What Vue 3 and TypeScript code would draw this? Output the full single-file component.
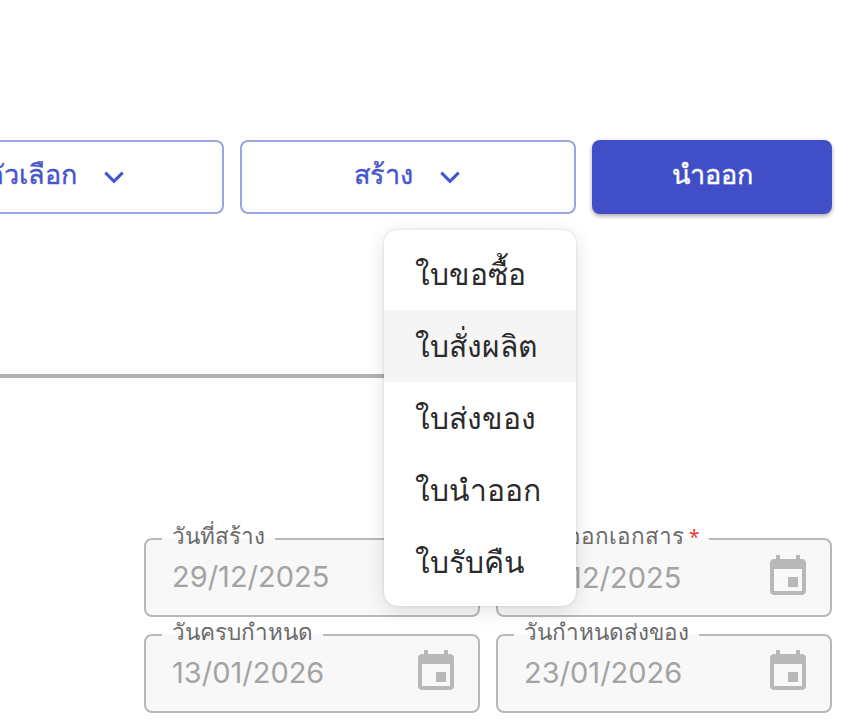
<template>
  <div class="page">
    <div class="actions">
      <button class="btn outline">
        <span class="btn-text">ตัวเลือก</span>
        <svg class="chevron" viewBox="0 0 24 24"><path d="M6.8 9.4 12 14.6l5.2-5.2" /></svg>
      </button>
      <div class="dropdown">
        <button class="btn outline">
          <span class="btn-text">สร้าง</span>
          <svg class="chevron" viewBox="0 0 24 24"><path d="M6.8 9.4 12 14.6l5.2-5.2" /></svg>
        </button>
        <ul class="menu">
          <li v-for="item in menuItems" :key="item" :class="{ hover: item === hoverItem }">{{ item }}</li>
        </ul>
      </div>
      <button class="btn primary"><span class="btn-text">นำออก</span></button>
    </div>

    <div class="divider"></div>

    <div class="dates">
      <fieldset v-for="field in dateFields" :key="field.label" class="date-field">
        <legend>{{ field.label }}<span v-if="field.required" class="req"> *</span></legend>
        <div class="date-row">
          <span class="date-value">{{ field.value }}</span>
          <svg class="calendar" viewBox="0 0 24 24">
            <path d="M17 12h-5v5h5v-5zM16 1v2H8V1H6v2H5c-1.11 0-1.99.9-1.99 2L3 19c0 1.1.89 2 2 2h14c1.1 0 2-.9 2-2V5c0-1.1-.9-2-2-2h-1V1h-2zm3 18H5V8h14v11z" />
          </svg>
        </div>
      </fieldset>
    </div>
  </div>
</template>

<script setup lang="ts">
interface DateField {
  label: string;
  value: string;
  required?: boolean;
}

const menuItems: string[] = ["ใบขอซื้อ", "ใบสั่งผลิต", "ใบส่งของ", "ใบนำออก", "ใบรับคืน"];
const hoverItem = "ใบสั่งผลิต";

const dateFields: DateField[] = [
  { label: "วันที่สร้าง", value: "29/12/2025" },
  { label: "วันที่ออกเอกสาร", value: "29/12/2025", required: true },
  { label: "วันครบกำหนด", value: "13/01/2026" },
  { label: "วันกำหนดส่งของ", value: "23/01/2026" },
];
</script>

<style>
html,
body {
  margin: 0;
  overflow: hidden;
  background: #fff;
}
</style>

<style scoped>
.page {
  box-sizing: border-box;
  width: 860px;
  height: 724px;
  padding: 140px 28px 0 0;
  overflow: hidden;
  font-family: "Noto Sans", "Liberation Sans", sans-serif;
}

.actions {
  display: flex;
  justify-content: flex-end;
  gap: 16px;
}

.btn {
  box-sizing: border-box;
  display: flex;
  flex-shrink: 0;
  align-items: center;
  justify-content: center;
  gap: 17px;
  height: 74px;
  padding: 0;
  border-radius: 8px;
  font-family: inherit;
  font-size: 27px;
  font-weight: 500;
}

.btn-text {
  margin-bottom: 5px;
  -webkit-text-stroke: 0.4px currentColor;
}

.outline {
  width: 336px;
  padding-left: 7px;
  border: 2px solid #9ca4e8;
  background: #fff;
  color: #4656cc;
}

.primary {
  width: 240px;
  border: none;
  background: #404fc7;
  color: #fff;
  box-shadow: 0 2px 4px rgba(0, 0, 0, 0.35);
}

.chevron {
  width: 40px;
  height: 40px;
  fill: none;
  stroke: #4656cc;
  stroke-width: 1.9;
}

.dropdown {
  position: relative;
}

.menu {
  position: absolute;
  top: 90px;
  right: 0;
  z-index: 2;
  width: 192px;
  margin: 0;
  padding: 8px 0;
  list-style: none;
  background: #fff;
  border-radius: 14px;
  box-shadow: 0 4px 20px rgba(0, 0, 0, 0.12), 0 0 3px rgba(0, 0, 0, 0.12);
}

.menu li {
  box-sizing: border-box;
  height: 72px;
  padding: 0 0 0 31px;
  line-height: 72px;
  font-size: 30px;
  color: #2b2b2b;
  white-space: nowrap;
}

.menu li.hover {
  background: #f5f5f5;
}

.divider {
  width: 500px;
  height: 4px;
  margin-top: 160px;
  background: #b0b0b0;
}

.dates {
  display: grid;
  grid-template-columns: 336px 336px;
  justify-content: end;
  column-gap: 16px;
  row-gap: 1px;
  margin-top: 144px;
}

.date-field {
  box-sizing: border-box;
  min-width: 0;
  height: 95px;
  margin: 0;
  padding: 0 18px 0 26px;
  border: 2px solid #b8b8b8;
  border-radius: 8px;
  background: #f8f8f8;
}

.date-field legend {
  margin-left: -10px;
  padding: 0 10px 5px;
  font-size: 22.5px;
  line-height: 28px;
  color: #6b6b6b;
  white-space: nowrap;
}

.req {
  font-size: 19px;
  color: #e53935;
}

.date-row {
  display: flex;
  align-items: center;
  justify-content: space-between;
  height: 42px;
}

.date-value {
  font-family: Inter, "Noto Sans", sans-serif;
  font-size: 29px;
  color: #a3a3a3;
}

.calendar {
  width: 48px;
  height: 48px;
  flex-shrink: 0;
  fill: #b8b8b8;
}
</style>
